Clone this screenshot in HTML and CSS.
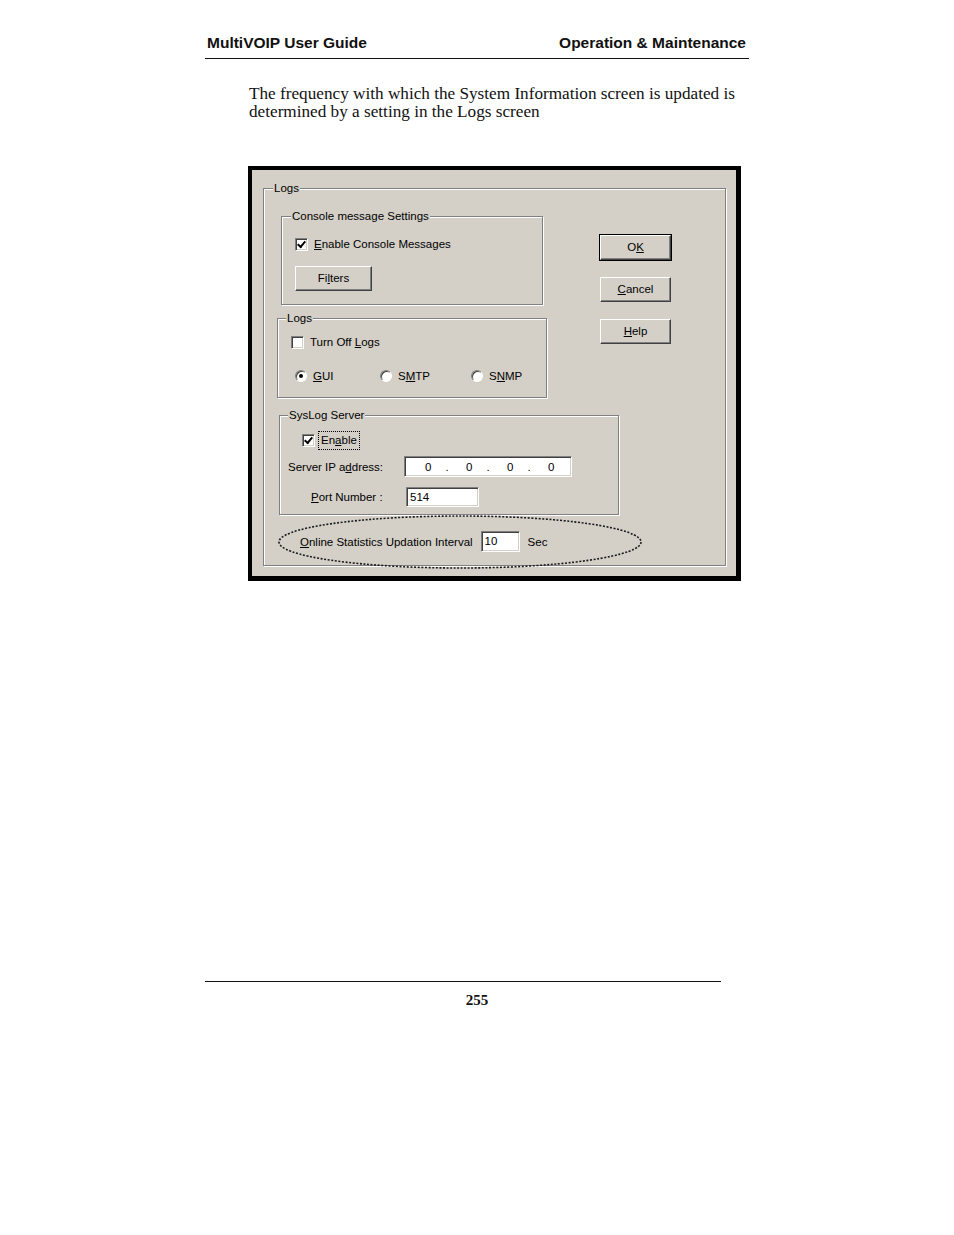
FILE: index.html
```html
<!DOCTYPE html>
<html>
<head>
<meta charset="utf-8">
<link rel="stylesheet" href="styles.css">
</head>
<body>
<div class="page">
  <div class="header">
    <span>MultiVOIP User Guide</span>
    <span>Operation &amp; Maintenance</span>
  </div>
  <p class="intro">The frequency with which the System Information screen is updated is determined by a setting in the Logs screen</p>

  <div class="dialog">
    <div class="grp grp-outer">
      <span class="legend">Logs</span>
      <div class="top-row">
        <div class="left-col">
          <div class="grp grp-console">
            <span class="legend">Console message Settings</span>
            <div class="chk-row chk-console">
              <span class="chk checked"></span>
              <span class="lbl"><u>E</u>nable Console Messages</span>
            </div>
            <div class="btn btn-filters">Fi<u>l</u>ters</div>
          </div>
          <div class="grp grp-logs">
            <span class="legend">Logs</span>
            <div class="chk-row chk-logs">
              <span class="chk"></span>
              <span class="lbl">Turn Off <u>L</u>ogs</span>
            </div>
            <div class="radio-row">
              <div class="radio-item r-gui"><span class="radio on"></span><span class="lbl"><u>G</u>UI</span></div>
              <div class="radio-item r-smtp"><span class="radio"></span><span class="lbl">S<u>M</u>TP</span></div>
              <div class="radio-item r-snmp"><span class="radio"></span><span class="lbl">S<u>N</u>MP</span></div>
            </div>
          </div>
        </div>
        <div class="buttons">
          <div class="btn btn-default">O<u>K</u></div>
          <div class="btn"><u>C</u>ancel</div>
          <div class="btn"><u>H</u>elp</div>
        </div>
      </div>
      <div class="grp grp-syslog">
        <span class="legend">SysLog Server</span>
        <div class="chk-row chk-syslog">
          <span class="chk checked"></span>
          <span class="lbl focus">En<u>a</u>ble</span>
        </div>
        <div class="field-row row-ip">
          <span class="flabel">Server IP a<u>d</u>dress:</span>
          <div class="edit ip">
            <span>0</span><span class="dot">.</span><span>0</span><span class="dot">.</span><span>0</span><span class="dot">.</span><span>0</span>
          </div>
        </div>
        <div class="field-row row-port">
          <span class="flabel"><u>P</u>ort Number :</span>
          <div class="edit port">514</div>
        </div>
      </div>
      <div class="online-row">
        <span class="lbl"><u>O</u>nline Statistics Updation Interval</span>
        <div class="edit interval">10</div>
        <span class="lbl sec">Sec</span>
      </div>
      <svg class="ellipse" width="368" height="60" viewBox="0 0 368 60">
        <ellipse cx="184" cy="29" rx="181" ry="26" fill="none" stroke="#1a1a1a" stroke-width="1.6" stroke-dasharray="2 1.6"/>
      </svg>
    </div>
  </div>

  <div class="footer">
    <div class="footer-rule"></div>
    <div class="pageno">255</div>
  </div>
</div>
</body>
</html>
```

FILE: styles.css
```css
html, body {
  margin: 0;
  padding: 0;
  background: #ffffff;
}

.page {
  width: 544px;
  margin-left: 205px;
  padding-top: 34px;
}

.header {
  display: flex;
  justify-content: space-between;
  font-family: "Liberation Sans", Arial, sans-serif;
  font-weight: bold;
  font-size: 15.5px;
  line-height: 18px;
  color: #111;
  padding: 0 3px 6px 2px;
  border-bottom: 1px solid #111;
}

.intro {
  margin: 26px 0 0 44px;
  width: 500px;
  font-family: "Liberation Serif", "Times New Roman", serif;
  font-size: 17.2px;
  line-height: 18px;
  color: #111;
}

/* ---- dialog ---- */
.dialog {
  margin: 45px 0 0 43px;
  width: 493px;
  height: 415px;
  box-sizing: border-box;
  background: #d4d0c8;
  border: 4px solid #000;
  border-right-width: 5px;
  border-bottom-width: 5px;
  padding: 18px 0 0 11px;
  font-family: "Liberation Sans", Arial, sans-serif;
  font-size: 11.5px;
  color: #000;
}

.dialog u {
  text-decoration: underline;
  text-underline-offset: 1px;
}

.grp {
  position: relative;
  box-sizing: border-box;
  border: 1px solid #808080;
  box-shadow: inset 1px 1px 0 #ffffff, 1px 1px 0 #ffffff;
}

.legend {
  position: absolute;
  top: -8px;
  left: 9px;
  padding: 0 1px;
  line-height: 14px;
  background: #d4d0c8;
  white-space: nowrap;
}

.grp-outer {
  width: 463px;
  height: 378px;
}

.top-row {
  display: flex;
  align-items: flex-start;
}

.left-col {
  width: 283px;
}

.grp-console {
  margin: 27px 0 0 17px;
  width: 262px;
  height: 89px;
  padding: 20px 0 0 13px;
}

.grp-logs {
  margin: 13px 0 0 13px;
  width: 270px;
  height: 80px;
  padding: 16px 0 0 13px;
}

.grp-logs .legend,
.grp-syslog .legend {
  left: 8px;
}

.chk-row {
  display: flex;
  align-items: center;
  height: 15px;
}

.chk {
  display: inline-block;
  box-sizing: border-box;
  width: 13px;
  height: 13px;
  background: #fff;
  border: 1px solid;
  border-color: #808080 #ffffff #ffffff #808080;
  box-shadow: inset 1px 1px 0 #404040, inset -1px -1px 0 #d4d0c8;
  position: relative;
  flex: none;
}

.chk.checked::after {
  content: "";
  position: absolute;
  left: 2px;
  top: 0px;
  width: 3px;
  height: 6px;
  border: solid #000;
  border-width: 0 2px 2px 0;
  transform: translate(1px, 0.5px) rotate(40deg);
}

.chk-row .lbl {
  margin-left: 6px;
  line-height: 15px;
}

.btn {
  box-sizing: border-box;
  width: 71px;
  height: 25px;
  display: flex;
  align-items: center;
  justify-content: center;
  background: #d4d0c8;
  border: 1px solid;
  border-color: #ffffff #404040 #404040 #ffffff;
  box-shadow: inset -1px -1px 0 #808080;
  padding-bottom: 1px;
}

.btn-filters {
  width: 77px;
  height: 25px;
  margin-top: 14px;
}

.buttons {
  display: flex;
  flex-direction: column;
  gap: 17px;
  margin: 46px 0 0 53px;
}

.btn-default {
  outline: 1px solid #000;
}

.radio-row {
  display: flex;
  margin-top: 18px;
  height: 15px;
}

.radio-item {
  display: flex;
  align-items: center;
}

.r-gui { margin-left: 4px; width: 85px; }
.r-smtp { width: 91px; }

.radio-item .lbl {
  margin-left: 6px;
}

.radio {
  display: inline-block;
  box-sizing: border-box;
  width: 12px;
  height: 12px;
  border-radius: 50%;
  background: #fff;
  border: 1px solid;
  border-color: #808080 #ffffff #ffffff #808080;
  box-shadow: inset 1px 1px 0 #404040;
  position: relative;
  flex: none;
}

.radio.on::after {
  content: "";
  position: absolute;
  left: 3px;
  top: 3px;
  width: 4px;
  height: 4px;
  border-radius: 50%;
  background: #000;
}

.grp-syslog {
  margin: 17px 0 0 15px;
  width: 340px;
  height: 100px;
  padding: 17px 0 0 22px;
}

.chk-syslog .lbl {
  margin-left: 5px;
}

.focus {
  outline: 1px dotted #000;
  outline-offset: 1px;
  padding: 0 1px;
}

.field-row {
  display: flex;
  align-items: center;
  margin-left: -22px;
}

.row-ip {
  margin-top: 8px;
}

.row-port {
  margin-top: 10px;
}

.row-ip .flabel {
  width: 116px;
  padding-left: 8px;
}

.row-port .flabel {
  width: 95px;
  padding-left: 31px;
}

.edit {
  box-sizing: border-box;
  background: #fff;
  border: 1px solid;
  border-color: #808080 #ffffff #ffffff #808080;
  box-shadow: inset 1px 1px 0 #404040, inset -1px -1px 0 #d4d0c8;
  line-height: 18px;
  padding-left: 3px;
}

.ip {
  width: 168px;
  height: 21px;
  display: flex;
  align-items: center;
  padding-left: 20px;
}

.ip span {
  width: 20.5px;
}

.port {
  width: 73px;
  height: 20px;
}

.online-row {
  display: flex;
  align-items: center;
  margin: 16px 0 0 36px;
}

.interval {
  width: 39px;
  height: 21px;
  margin-left: 8px;
  line-height: 19px;
}

.sec {
  margin-left: 8px;
}

.ellipse {
  position: absolute;
  left: 12px;
  top: 324px;
  pointer-events: none;
}

/* ---- footer ---- */
.footer {
  margin-top: 400px;
}

.footer-rule {
  width: 516px;
  border-top: 1px solid #111;
}

.pageno {
  text-align: center;
  font-family: "Liberation Serif", "Times New Roman", serif;
  font-weight: bold;
  font-size: 15px;
  line-height: 18px;
  margin-top: 9px;
  color: #111;
}
```
